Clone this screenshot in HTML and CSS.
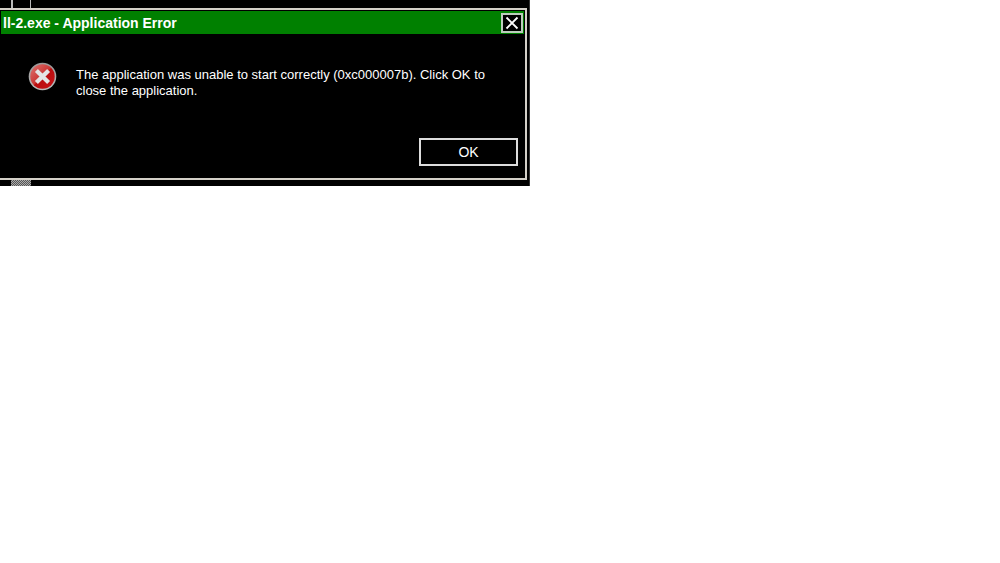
FILE: index.html
```html
<!DOCTYPE html>
<html lang="en">
<head>
<meta charset="utf-8">
<title>Application Error</title>
<link rel="stylesheet" href="styles.css">
</head>
<body>
<main class="desktop">
  <div class="strip strip-top"><span class="track"></span></div>
  <section class="dialog" role="alertdialog" aria-labelledby="title" aria-describedby="message">
    <header class="titlebar">
      <h1 class="title" id="title">ll-2.exe - Application Error</h1>
      <button class="close" type="button" aria-label="Close">
        <svg width="14" height="14" viewBox="0 0 14 14" aria-hidden="true"><path d="M1.5 1.5 12.5 12.5M12.5 1.5 1.5 12.5" stroke="#fff" stroke-width="1.8" fill="none"/></svg>
      </button>
    </header>
    <div class="content">
      <svg class="icon" width="29" height="29" viewBox="0 0 29 29" aria-hidden="true">
        <defs>
          <linearGradient id="red" x1="0" y1="0" x2="1" y2="1"><stop offset="0" stop-color="#df7773"/><stop offset=".48" stop-color="#ca3634"/><stop offset=".52" stop-color="#b90d0f"/><stop offset="1" stop-color="#c91418"/></linearGradient>
          <linearGradient id="rim" x1="0" y1="0" x2="0" y2="1"><stop offset="0" stop-color="#999"/><stop offset="1" stop-color="#bbb"/></linearGradient>
        </defs>
        <circle cx="14.5" cy="14.5" r="13.8" fill="url(#rim)"/>
        <circle cx="14.5" cy="14.5" r="12.2" fill="url(#red)"/>
        <path d="M8.4 8.4 20.6 20.6M20.6 8.4 8.4 20.6" stroke="#e4e4e4" stroke-width="4.2" fill="none"/>
      </svg>
      <p class="message" id="message">The application was unable to start correctly (0xc000007b). Click OK to close the application.</p>
    </div>
    <footer class="actions"><button class="ok" type="button">OK</button></footer>
  </section>
  <div class="strip strip-bottom"><span class="thumb"></span></div>
</main>
</body>
</html>
```
FILE: styles.css
```css
* { box-sizing: border-box; }

body {
  margin: 0;
  background: #fff;
  color: #fff;
  font-family: "Liberation Sans", Arial, sans-serif;
  font-size: 14px;
}

.desktop {
  width: 53%;
  min-width: 320px;
  background: #000;
  border-right: 1px solid #333;
}

.strip {
  display: flex;
  padding-left: 11px;
}

.strip-top { height: 8px; }
.strip-bottom { height: 6px; }

.track {
  width: 20px;
  border: solid #bbb;
  border-width: 0 1px 0 2px;
}

.thumb {
  width: 20px;
  background: repeating-conic-gradient(#aaa 0 25%, #555 0 50%) 0 0 / 2px 2px;
}

.dialog {
  margin-right: 2px;
  border: 2px solid #d4d0c8;
  border-left: 0;
  padding: 1px 1px 12px;
}

.titlebar {
  display: flex;
  align-items: center;
  justify-content: space-between;
  height: 23px;
  padding: 0 1px 0 2px;
  background: #008000;
}

.title {
  margin: 0;
  font-size: 14px;
  line-height: 16px;
}

.close {
  display: grid;
  place-items: center;
  width: 22px;
  height: 20px;
  padding: 0;
  border: 2px solid #bdcdbd;
  background: #000;
}

.content {
  display: flex;
  gap: 19px;
  min-height: 104px;
  padding: 28px 32px 0 27px;
}

.icon { flex: none; }

.message {
  margin: 0;
  padding-top: 5px;
  font-size: 13px;
  line-height: 16px;
}

.actions {
  display: flex;
  justify-content: flex-end;
  padding-right: 6px;
}

.ok {
  width: 99px;
  height: 28px;
  padding: 0;
  border: 2px solid #ddd;
  background: #000;
  color: #fff;
  font: inherit;
}
```
